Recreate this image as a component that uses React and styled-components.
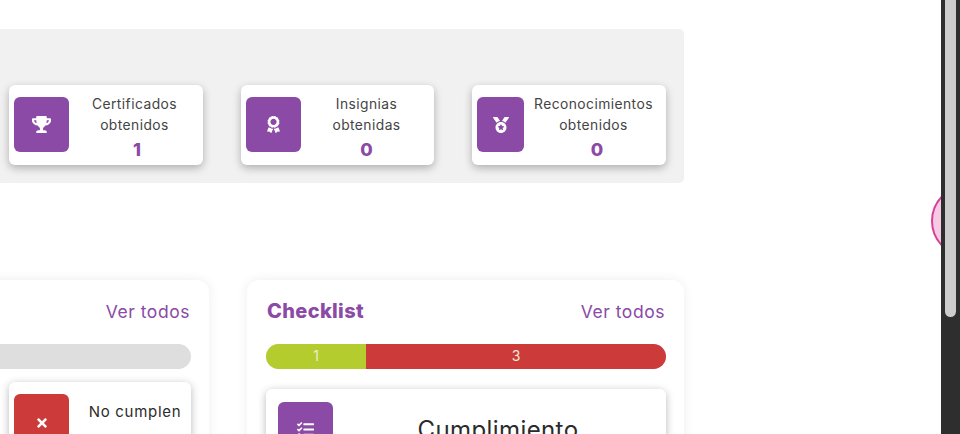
import React from "react";
import styled, { createGlobalStyle } from "styled-components";
import { FaTrophy, FaAward, FaMedal, FaTasks, FaTimes } from "react-icons/fa";

const Global = createGlobalStyle`
  html, body { margin: 0; padding: 0; height: 100%; overflow: hidden; background: #fff; }
  body { font-family: "Inter", "Open Sans", sans-serif; color: #333; }
`;
const Page = styled.div`display: flex; height: 434px; width: 960px;`;
const Viewport = styled.main`position: relative; flex: 1; min-width: 0; overflow: hidden;`;
const Content = styled.div`width: 912px; margin-left: -228px; padding-top: 29px;`;
const Band = styled.section`
  display: flex; justify-content: flex-end; gap: 38px;
  height: 154px; box-sizing: border-box; padding: 56px 18px 18px;
  background: #f1f1f1; border-radius: 5px;
`;
const StatCard = styled.article`
  display: flex; align-items: flex-start; box-sizing: border-box;
  width: ${p => p.$width}px; height: 80px; padding: 12px 5px;
  background: #fff; border-radius: 6px; box-shadow: 0 3px 8px rgba(0,0,0,.28);
`;
const IconBox = styled.div`
  flex: 0 0 ${p => p.$width || 55}px; height: 55px; border-radius: 6px;
  display: flex; align-items: center; justify-content: center;
  background: ${p => p.$color || "#8b4aa6"}; color: #fff;
`;
const StatText = styled.div`
  flex: 1; min-width: 0; margin-top: -3.5px; padding-left: ${p => p.$inset}px; text-align: center;
  font-size: 13.8px; line-height: 21px; letter-spacing: .45px; color: #444; white-space: nowrap;
`;
const StatNumber = styled.div`
  margin-top: 2px; padding-left: ${p => p.$nudge}px; font-size: 18px; line-height: 24px;
  font-weight: 800; letter-spacing: 0; color: #8b4aa6;
`;
const Row = styled.div`display: grid; grid-template-columns: 437px 437px; gap: 38px; margin-top: 97px;`;
const Panel = styled.section`
  box-sizing: border-box; height: 300px; padding: 19px 18px 0 19px;
  background: #fff; border-radius: 12px; box-shadow: 0 0 12px rgba(0,0,0,.07);
`;
const PanelHead = styled.header`
  display: flex; align-items: center; justify-content: ${p => p.$end ? "flex-end" : "space-between"};
  height: 24px; padding: 0 1px; margin-bottom: 21px;
`;
const Title = styled.h2`margin: 0; font-size: 20px; font-weight: 800; letter-spacing: .35px; color: #8b4aa6;`;
const Link = styled.a`font-size: 17.5px; letter-spacing: .55px; color: #8b4aa6;`;
const Bar = styled.div`
  display: flex; height: 25px; border-radius: 12.5px; overflow: hidden;
  background: #dedede;
`;
const Segment = styled.div`
  width: ${p => p.$width}px; flex: ${p => p.$grow ? 1 : "none"};
  background: ${p => p.$color}; color: #ececd8;
  font-size: 14px; line-height: 23px; text-align: center;
`;
const DetailRow = styled.div`display: flex; justify-content: flex-end; margin-top: ${p => p.$top}px;`;
const DetailCard = styled.article`
  display: flex; box-sizing: border-box; width: ${p => p.$width}px; height: 120px;
  padding: ${p => p.$pad}; background: #fff; border-radius: 6px; box-shadow: 0 2px 8px rgba(0,0,0,.28);
`;
const DetailLabel = styled.div`
  flex: 1; padding-left: ${p => p.$inset}px; text-align: center; white-space: nowrap; color: #2b2b2b;
  font-size: ${p => p.$size}px; line-height: ${p => p.$line}px; letter-spacing: ${p => p.$track}px;
`;
const Scrollbar = styled.div`flex: 0 0 19px; position: relative; z-index: 2; background: #2e2e2e;`;
const Thumb = styled.div`
  width: 11px; height: 317px; margin-left: 4px;
  background: #cdcdcd; border-radius: 0 0 6px 6px;
`;
const Bubble = styled.div`
  position: absolute; left: 931px; top: 185px; width: 72px; height: 72px; box-sizing: border-box;
  border: 2px solid #d83f98; border-radius: 50%; background: #f6c9e4;
`;

export default function App() {
  return (
    <Page>
      <Global />
      <Viewport>
        <Content>
          <Band>
            <StatCard $width={194}>
              <IconBox><FaTrophy size={19} /></IconBox>
              <StatText $inset={2}>Certificados<br />obtenidos<StatNumber $nudge={5}>1</StatNumber></StatText>
            </StatCard>
            <StatCard $width={193}>
              <IconBox><FaAward size={17} /></IconBox>
              <StatText $inset={3}>Insignias<br />obtenidas<StatNumber $nudge={0}>0</StatNumber></StatText>
            </StatCard>
            <StatCard $width={194}>
              <IconBox $width={47}><FaMedal size={16} /></IconBox>
              <StatText $inset={2}>Reconocimientos<br />obtenidos<StatNumber $nudge={7}>0</StatNumber></StatText>
            </StatCard>
          </Band>
          <Row>
            <Panel>
              <PanelHead $end><Link>Ver todos</Link></PanelHead>
              <Bar />
              <DetailRow $top={13}>
                <DetailCard $width={182} $pad="12px 5px">
                  <IconBox $color="#cc3a3a"><FaTimes size={14} style={{ marginTop: 2 }} /></IconBox>
                  <DetailLabel $inset={15} $size={15} $line={36} $track={0.7}>No cumplen</DetailLabel>
                </DetailCard>
              </DetailRow>
            </Panel>
            <Panel>
              <PanelHead><Title>Checklist</Title><Link>Ver todos</Link></PanelHead>
              <Bar>
                <Segment $width={100} $color="#b5cc2e">1</Segment>
                <Segment $grow $color="#cc3a3a">3</Segment>
              </Bar>
              <DetailRow $top={20}>
                <DetailCard $width={400} $pad="13px 12px">
                  <IconBox><FaTasks size={17} /></IconBox>
                  <DetailLabel $inset={9} $size={24} $line={56} $track={0.4}>Cumplimiento</DetailLabel>
                </DetailCard>
              </DetailRow>
            </Panel>
          </Row>
        </Content>
        <Bubble />
      </Viewport>
      <Scrollbar><Thumb /></Scrollbar>
    </Page>
  );
}
